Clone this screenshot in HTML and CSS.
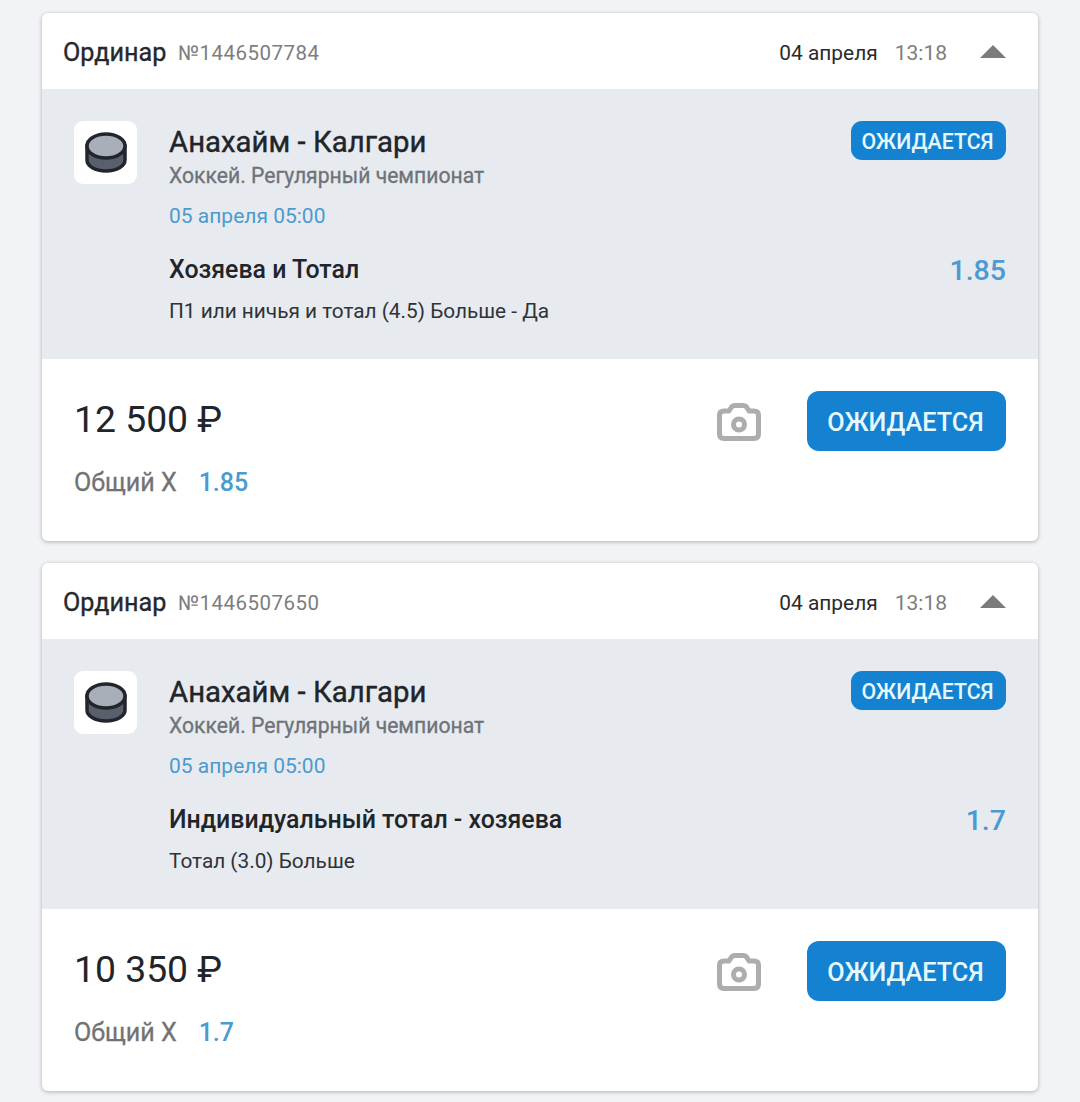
FILE: index.html
```html
<!DOCTYPE html>
<html lang="ru">
<head>
<meta charset="utf-8">
<title>Ставки</title>
<link rel="stylesheet" href="styles.css">
</head>
<body>
<main class="list">
  <article class="card">
    <header class="head">
      <span class="kind">Ординар</span>
      <span class="num">№1446507784</span>
      <span class="date">04 апреля</span>
      <span class="time">13:18</span>
      <svg class="caret" width="26" height="13" viewBox="0 0 26 13"><path d="M13 0 L26 13 H0 Z" fill="#7b7b7b"/></svg>
    </header>
    <section class="event">
      <div class="sport">
        <svg width="42" height="42" viewBox="0 0 42 42"><path d="M2 14 V28 C2 34 10 39 21 39 C32 39 40 34 40 28 V14 Z" fill="#59606c" stroke="#22262c" stroke-width="3.500"/><ellipse cx="21" cy="14" rx="19" ry="12" fill="#a8afb9" stroke="#22262c" stroke-width="3.500"/></svg>
      </div>
      <div class="info">
        <div class="top">
          <div>
            <h2 class="teams">Анахайм - Калгари</h2>
            <div class="league">Хоккей. Регулярный чемпионат</div>
          </div>
          <span class="badge">ОЖИДАЕТСЯ</span>
        </div>
        <div class="start">05 апреля 05:00</div>
        <div class="market">
          <span class="mname">Хозяева и Тотал</span>
          <span class="odd">1.85</span>
        </div>
        <div class="pick">П1 или ничья и тотал (4.5) Больше - Да</div>
      </div>
    </section>
    <footer class="foot">
      <div class="sums">
        <div class="amount">12 500 ₽</div>
        <div class="total"><span class="tlabel">Общий Х</span><span class="tval">1.85</span></div>
      </div>
      <svg class="cam" width="44" height="38" viewBox="0 0 44 38"><path d="M7 8 H12 L14.500 4 Q15.500 2.500 17.500 2.500 H26.500 Q28.500 2.500 29.500 4 L32 8 H37 Q41.500 8 41.500 12 V31 Q41.500 35.500 37 35.500 H7 Q2.500 35.500 2.500 31 V12 Q2.500 8 7 8 Z" fill="none" stroke="#adadad" stroke-width="5" stroke-linejoin="round"/><circle cx="22" cy="21.500" r="5.500" fill="none" stroke="#adadad" stroke-width="5"/></svg>
      <button class="btn">ОЖИДАЕТСЯ</button>
    </footer>
  </article>

  <article class="card">
    <header class="head">
      <span class="kind">Ординар</span>
      <span class="num">№1446507650</span>
      <span class="date">04 апреля</span>
      <span class="time">13:18</span>
      <svg class="caret" width="26" height="13" viewBox="0 0 26 13"><path d="M13 0 L26 13 H0 Z" fill="#7b7b7b"/></svg>
    </header>
    <section class="event">
      <div class="sport">
        <svg width="42" height="42" viewBox="0 0 42 42"><path d="M2 14 V28 C2 34 10 39 21 39 C32 39 40 34 40 28 V14 Z" fill="#59606c" stroke="#22262c" stroke-width="3.500"/><ellipse cx="21" cy="14" rx="19" ry="12" fill="#a8afb9" stroke="#22262c" stroke-width="3.500"/></svg>
      </div>
      <div class="info">
        <div class="top">
          <div>
            <h2 class="teams">Анахайм - Калгари</h2>
            <div class="league">Хоккей. Регулярный чемпионат</div>
          </div>
          <span class="badge">ОЖИДАЕТСЯ</span>
        </div>
        <div class="start">05 апреля 05:00</div>
        <div class="market">
          <span class="mname">Индивидуальный тотал - хозяева</span>
          <span class="odd">1.7</span>
        </div>
        <div class="pick">Тотал (3.0) Больше</div>
      </div>
    </section>
    <footer class="foot">
      <div class="sums">
        <div class="amount">10 350 ₽</div>
        <div class="total"><span class="tlabel">Общий Х</span><span class="tval">1.7</span></div>
      </div>
      <svg class="cam" width="44" height="38" viewBox="0 0 44 38"><path d="M7 8 H12 L14.500 4 Q15.500 2.500 17.500 2.500 H26.500 Q28.500 2.500 29.500 4 L32 8 H37 Q41.500 8 41.500 12 V31 Q41.500 35.500 37 35.500 H7 Q2.500 35.500 2.500 31 V12 Q2.500 8 7 8 Z" fill="none" stroke="#adadad" stroke-width="5" stroke-linejoin="round"/><circle cx="22" cy="21.500" r="5.500" fill="none" stroke="#adadad" stroke-width="5"/></svg>
      <button class="btn">ОЖИДАЕТСЯ</button>
    </footer>
  </article>
</main>
</body>
</html>
```

FILE: styles.css
```css
* { box-sizing: border-box; }
html, body { margin: 0; height: 100%; }
body {
  background: #f1f3f7;
  font-family: Roboto, "Liberation Sans", sans-serif;
  color: #212529;
  overflow: hidden;
}
.list {
  display: flex;
  flex-direction: column;
  gap: 22px;
  padding: 13px 42px 0;
}
.card {
  height: 528px;
  background: #fff;
  border-radius: 6px;
  box-shadow: 0 1px 4px rgba(0, 0, 0, .28);
  display: flex;
  flex-direction: column;
  overflow: hidden;
}
.head {
  height: 76px;
  flex: none;
  display: flex;
  align-items: center;
  padding: 3px 32px 0 21px;
}
.kind { font-size: 25.200px; font-weight: 400; -webkit-text-stroke: .35px; color: #26292c; }
.num { font-size: 20.500px; color: #7d7d7d; margin-left: 11.500px; letter-spacing: .48px; }
.date { font-size: 20.900px; margin-left: auto; color: #2b2b2b; }
.time { font-size: 21px; color: #7d7d7d; margin-left: 17px; }
.caret { margin-left: 33px; margin-top: -2px; }
.event {
  height: 270px;
  flex: none;
  background: #e7eaef;
  display: flex;
  padding: 32px 32px 0;
}
.sport {
  width: 63px;
  height: 63px;
  flex: none;
  background: #fff;
  border-radius: 9px;
  display: flex;
  align-items: center;
  justify-content: center;
}
.info { flex: 1; margin-left: 32px; }
.top { display: flex; justify-content: space-between; align-items: flex-start; }
.teams { margin: 0; font-size: 29.350px; font-weight: 400; -webkit-text-stroke: .4px; line-height: 42px; color: #212529; }
.league { font-size: 21.150px; line-height: 24px; color: #6e7378; font-weight: 400; -webkit-text-stroke: .3px; margin-top: 1px; }
.badge {
  height: 39px;
  width: 155px;
  padding-right: 2px;
  text-align: center;
  background: #1482d0;
  color: #e6f9ff;
  border-radius: 11px;
  font-size: 21.300px;
  font-weight: 500;
  line-height: 41px;
}
.start { font-size: 21px; line-height: 24px; color: #4b9ad0; margin-top: 16px; }
.market { display: flex; justify-content: space-between; align-items: center; margin-top: 27px; height: 34px; }
.mname { font-size: 24.900px; font-weight: 500; margin-top: -6px; }
.odd { font-size: 28.500px; font-weight: 500; color: #4b9ad0; margin-top: -3px; }
.pick { font-size: 20.800px; line-height: 24px; margin-top: 10px; color: #2f3337; }
.foot {
  flex: 1;
  display: flex;
  align-items: flex-start;
  padding: 32px 32px 0 32px;
}
.sums { flex: 1; }
.amount { font-size: 37.300px; line-height: 56px; color: #212529; }
.total { margin-top: 21px; display: flex; align-items: baseline; }
.tlabel { font-size: 25.100px; color: #727272; font-weight: 400; -webkit-text-stroke: .3px; }
.tval { font-size: 25px; color: #4b9ad0; font-weight: 500; margin-left: 22px; }
.cam { margin: 12px 46.500px 0 0; }
.btn {
  width: 199px;
  height: 60px;
  border: 0;
  padding: 2px 2px 0 0;
  background: #1482d0;
  color: #e6f9ff;
  border-radius: 12px;
  font-family: inherit;
  font-size: 25.200px;
  font-weight: 500;
}
```
